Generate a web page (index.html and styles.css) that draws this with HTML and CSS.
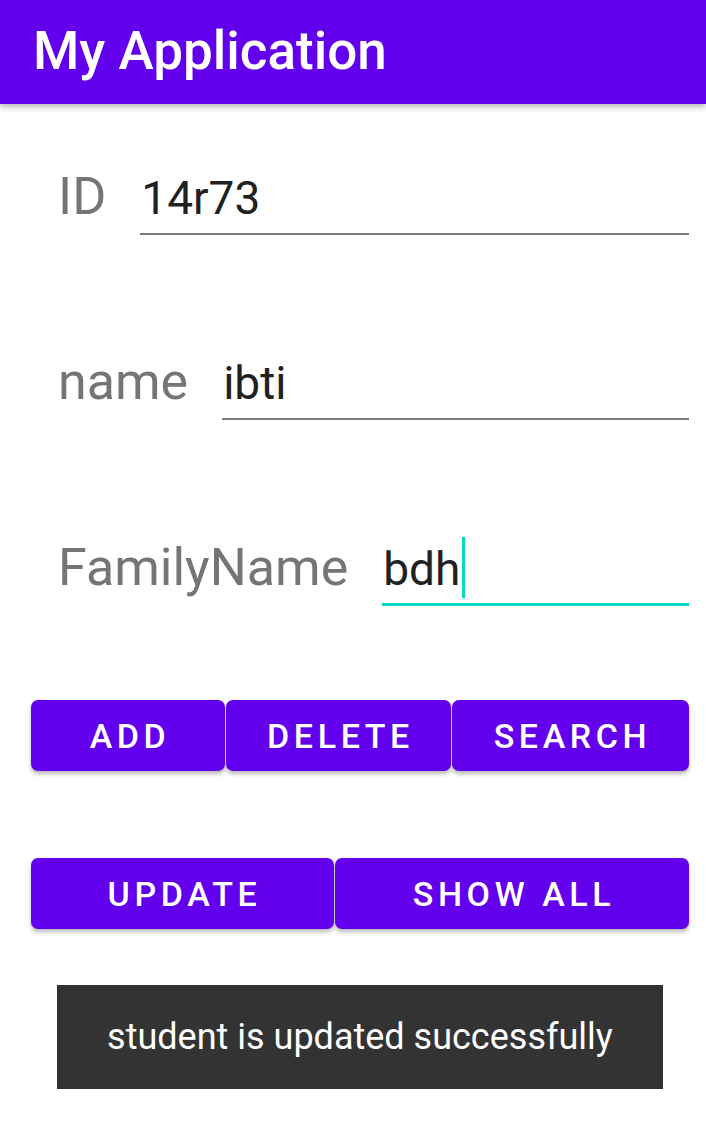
FILE: index.html
```html
<!DOCTYPE html>
<html>
<head>
<meta charset="utf-8">
<link rel="stylesheet" href="styles.css">
</head>
<body>
<header class="appbar"><span class="title">My Application</span></header>
<main class="content">
  <div class="row row-first">
    <span class="label">ID</span>
    <span class="field">14r73</span>
  </div>
  <div class="row">
    <span class="label">name</span>
    <span class="field">ibti</span>
  </div>
  <div class="row">
    <span class="label">FamilyName</span>
    <span class="field field-focused">bdh<span class="cursor"></span></span>
  </div>
  <div class="buttons buttons-three">
    <button class="btn">ADD</button>
    <button class="btn">DELETE</button>
    <button class="btn">SEARCH</button>
  </div>
  <div class="buttons buttons-two">
    <button class="btn">UPDATE</button>
    <button class="btn">SHOW ALL</button>
  </div>
  <div class="toast">student is updated successfully</div>
</main>
</body>
</html>
```

FILE: styles.css
```css
html, body {
  margin: 0;
  padding: 0;
  background: #ffffff;
  font-family: Roboto, "Noto Sans", sans-serif;
}

.appbar {
  height: 104px;
  background: #6200ee;
  display: flex;
  align-items: center;
  padding: 0 0 2px 33px;
  box-sizing: border-box;
  box-shadow: 0 3px 6px rgba(0, 0, 0, 0.28);
  position: relative;
  z-index: 1;
}

.title {
  color: #ffffff;
  font-size: 53px;
  font-weight: 500;
}

.content {
  padding: 63px 17px 0 0;
}

.row {
  display: flex;
  align-items: baseline;
  gap: 34px;
  padding-left: 58px;
  font-size: 52px;
  line-height: 60px;
  margin-top: 117px;
}

.row-first {
  margin-top: 0;
}

.label {
  color: #757575;
}

.field {
  flex: 1;
  color: #212121;
  font-size: 46px;
  padding: 0 0 5px 1px;
  border-bottom: 2px solid #7a7a7a;
}

.field-focused {
  padding-bottom: 4px;
  border-bottom: 3px solid #03dac5;
}

.cursor {
  display: inline-block;
  width: 3px;
  height: 61px;
  margin-left: 2px;
  background: #03dac5;
  vertical-align: -13px;
}

.buttons {
  display: grid;
  gap: 1px;
  margin-left: 31px;
}

.buttons-three {
  grid-template-columns: 194px 225px 237px;
  margin-top: 94px;
}

.buttons-two {
  grid-template-columns: 303px 354px;
  margin-top: 87px;
}

.btn {
  height: 71px;
  border: none;
  border-radius: 7px;
  background: #6200ee;
  color: #ffffff;
  font-family: Roboto, "Noto Sans", sans-serif;
  font-size: 34px;
  font-weight: 500;
  letter-spacing: 4.6px;
  padding: 0 0 0 4px;
  box-shadow: 0 3px 4px rgba(0, 0, 0, 0.28);
}

.toast {
  margin: 56px 26px 0 57px;
  height: 104px;
  background: #333333;
  color: #ffffff;
  font-size: 36px;
  display: flex;
  align-items: center;
  justify-content: center;
}
```
